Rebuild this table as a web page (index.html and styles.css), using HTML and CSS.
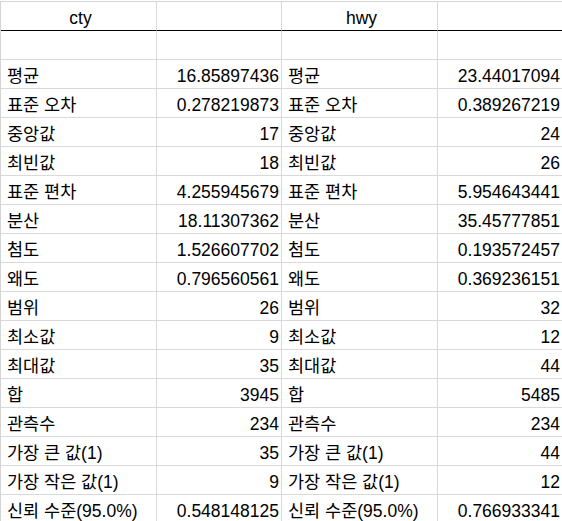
FILE: index.html
```html
<!DOCTYPE html>
<html lang="ko">
<head>
<meta charset="utf-8">
<title>기술 통계량</title>
<link rel="stylesheet" href="styles.css">
</head>
<body>
<div class="sheet">
  <div class="cell head center">cty</div>
  <div class="cell head"></div>
  <div class="cell head center">hwy</div>
  <div class="cell head"></div>

  <div class="cell"></div><div class="cell"></div><div class="cell"></div><div class="cell"></div>

  <div class="cell">평균</div><div class="cell num">16.85897436</div><div class="cell">평균</div><div class="cell num">23.44017094</div>
  <div class="cell">표준 오차</div><div class="cell num">0.278219873</div><div class="cell">표준 오차</div><div class="cell num">0.389267219</div>
  <div class="cell">중앙값</div><div class="cell num">17</div><div class="cell">중앙값</div><div class="cell num">24</div>
  <div class="cell">최빈값</div><div class="cell num">18</div><div class="cell">최빈값</div><div class="cell num">26</div>
  <div class="cell">표준 편차</div><div class="cell num">4.255945679</div><div class="cell">표준 편차</div><div class="cell num">5.954643441</div>
  <div class="cell">분산</div><div class="cell num">18.11307362</div><div class="cell">분산</div><div class="cell num">35.45777851</div>
  <div class="cell">첨도</div><div class="cell num">1.526607702</div><div class="cell">첨도</div><div class="cell num">0.193572457</div>
  <div class="cell">왜도</div><div class="cell num">0.796560561</div><div class="cell">왜도</div><div class="cell num">0.369236151</div>
  <div class="cell">범위</div><div class="cell num">26</div><div class="cell">범위</div><div class="cell num">32</div>
  <div class="cell">최소값</div><div class="cell num">9</div><div class="cell">최소값</div><div class="cell num">12</div>
  <div class="cell">최대값</div><div class="cell num">35</div><div class="cell">최대값</div><div class="cell num">44</div>
  <div class="cell">합</div><div class="cell num">3945</div><div class="cell">합</div><div class="cell num">5485</div>
  <div class="cell">관측수</div><div class="cell num">234</div><div class="cell">관측수</div><div class="cell num">234</div>
  <div class="cell">가장 큰 값(1)</div><div class="cell num">35</div><div class="cell">가장 큰 값(1)</div><div class="cell num">44</div>
  <div class="cell">가장 작은 값(1)</div><div class="cell num">9</div><div class="cell">가장 작은 값(1)</div><div class="cell num">12</div>
  <div class="cell">신뢰 수준(95.0%)</div><div class="cell num">0.548148125</div><div class="cell">신뢰 수준(95.0%)</div><div class="cell num">0.766933341</div>
</div>
</body>
</html>
```

FILE: styles.css
```css
html, body {
  margin: 0;
  padding: 0;
  background: #ffffff;
  overflow: hidden;
}

.sheet {
  margin-top: 1px;
  display: grid;
  grid-template-columns: 156px 125px 156px 125px;
  grid-auto-rows: 29px;
  border-top: 1px solid #d4d4d4;
  border-left: 1px solid #d4d4d4;
  width: 563px;
  font-family: "Liberation Sans", "Noto Sans CJK KR", sans-serif;
  font-size: 17.5px;
  color: #000000;
}

.cell {
  box-sizing: border-box;
  border-right: 1px solid #d9d9d9;
  border-bottom: 1px solid #d9d9d9;
  padding: 4px 2px 0 6px;
  line-height: 24px;
  white-space: nowrap;
  overflow: hidden;
}

.head {
  border-bottom: 1px solid #000000;
}

.center {
  text-align: center;
}

.num {
  text-align: right;
}
```
